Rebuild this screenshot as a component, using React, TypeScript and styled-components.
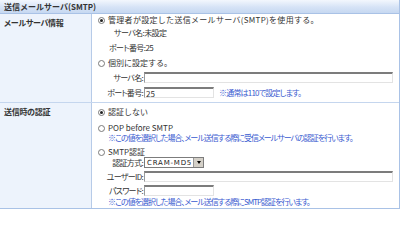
import styled, { createGlobalStyle } from 'styled-components';

const GlobalStyle = createGlobalStyle`
  body {
    margin: 0;
    background: #ffffff;
    font-family: 'Noto Sans CJK JP', 'Noto Sans', sans-serif;
    font-size: 8px;
    line-height: 10px;
    color: #333333;
  }
`;

const App = () => {
  return (
    <>
      <GlobalStyle />
      <Panel>
        <Header>送信メールサーバ(SMTP)</Header>
        <Row $pad='1px 6px 3px'>
          <Label>メールサーバ情報</Label>
          <Content>
            <RadioLine $gap={3} $spacing={0.3}>
              <Radio $checked />
              管理者が設定した送信メールサーバ(SMTP)を使用する。
            </RadioLine>
            <Fields $indent={16} $gap={5}>
              サーバ名:未設定
            </Fields>
            <Fields $indent={11} $gap={5}>
              ポート番号:25
            </Fields>
            <RadioLine $gap={4}>
              <Radio />
              個別に設定する。
            </RadioLine>
            <InputGrid $rowGap={4}>
              <FieldLabel>サーバ名:</FieldLabel>
              <TextInput $width={249} />
              <FieldLabel>ポート番号:</FieldLabel>
              <InputWithNote>
                <TextInput $width={70} defaultValue='25' />
                <Note>※通常は110で設定します。</Note>
              </InputWithNote>
            </InputGrid>
          </Content>
        </Row>
        <Row $pad='4px 6px 0'>
          <Label>送信時の認証</Label>
          <Content>
            <RadioLine $gap={6}>
              <Radio $checked />
              認証しない
            </RadioLine>
            <RadioLine $gap={0}>
              <Radio />
              POP before SMTP
            </RadioLine>
            <IndentNote $gap={4}>※この値を選択した場合、メール送信する際に受信メールサーバの認証を行います。</IndentNote>
            <RadioLine $gap={0}>
              <Radio />
              SMTP認証
            </RadioLine>
            <InputGrid $rowGap={3}>
              <FieldLabel>認証方式:</FieldLabel>
              <Select>
                <span>CRAM-MD5</span>
                <SelectArrow />
              </Select>
              <FieldLabel>ユーザーID:</FieldLabel>
              <TextInput $width={249} />
              <FieldLabel>パスワード:</FieldLabel>
              <TextInput $width={70} />
            </InputGrid>
            <IndentNote $gap={0}>※この値を選択した場合、メール送信する際にSMTP認証を行います。</IndentNote>
          </Content>
        </Row>
      </Panel>
    </>
  );
};

export default App;

const Panel = styled.div`
  width: 399px;
  height: 208px;
  border-right: 1px solid #a9c2e6;
  border-bottom: 1px solid #a9c2e6;
  display: flex;
  flex-direction: column;
  overflow: hidden;
`;

const Header = styled.div`
  height: 13px;
  line-height: 13px;
  padding-left: 4px;
  font-weight: bold;
  color: #333333;
  background: linear-gradient(#f3f7fd, #d6e3f6 55%, #c6d8f1);
  border-bottom: 1px solid #a9c2e6;
`;

const Row = styled.div<{ $pad: string }>`
  display: grid;
  grid-template-columns: 92px 1fr;
  border-bottom: 1px solid #c5d6ee;

  & > div:last-child {
    padding: ${p => p.$pad};
  }

  &:last-child {
    flex: 1;
    border-bottom: none;
  }
`;

const Label = styled.div`
  background: #edf3fc;
  border-right: 1px solid #b7cbe8;
  padding: 4px 4px;
  font-weight: bold;
  font-feature-settings: 'palt';
  letter-spacing: -0.3px;
  color: #333333;
`;

const Content = styled.div`
  display: flex;
  flex-direction: column;
`;

const RadioLine = styled.div<{ $gap: number; $spacing?: number }>`
  display: flex;
  align-items: center;
  height: 10px;
  white-space: nowrap;
  letter-spacing: ${p => p.$spacing ?? 0}px;
  margin-bottom: ${p => p.$gap}px;
`;

const Radio = styled.span<{ $checked?: boolean }>`
  width: 7px;
  height: 7px;
  margin-right: 3px;
  border-radius: 50%;
  border: 1px solid #7a7a7a;
  background: #ffffff;
  position: relative;
  box-sizing: border-box;
  flex-shrink: 0;

  &::after {
    content: '';
    display: ${p => (p.$checked ? 'block' : 'none')};
    position: absolute;
    left: 1px;
    top: 1px;
    width: 3px;
    height: 3px;
    border-radius: 50%;
    background: #222222;
  }
`;

const Fields = styled.div<{ $indent: number; $gap: number }>`
  height: 10px;
  padding-left: ${p => p.$indent}px;
  margin-bottom: ${p => p.$gap}px;
  font-feature-settings: 'palt';
  letter-spacing: -0.6px;
`;

const FieldLabel = styled.span`
  justify-self: end;
  white-space: nowrap;
  font-feature-settings: 'palt';
  letter-spacing: -0.7px;
  padding-right: 1px;
`;

const InputGrid = styled.div<{ $rowGap: number }>`
  display: grid;
  grid-template-columns: 46px auto;
  justify-content: start;
  align-items: center;
  row-gap: ${p => p.$rowGap}px;
  margin-bottom: 1px;
`;

const TextInput = styled.input<{ $width: number }>`
  width: ${p => p.$width}px;
  height: 11px;
  box-sizing: border-box;
  margin: 0;
  padding: 0 1px;
  font-family: 'Noto Sans CJK JP', sans-serif;
  font-size: 8px;
  color: #333333;
  border: 1px solid #e3e3e3;
  border-top: 2px solid #7c7c7c;
  border-left: 1px solid #9a9a9a;
  outline: none;
`;

const InputWithNote = styled.div`
  display: flex;
  align-items: center;
  gap: 5px;
`;

const Note = styled.span`
  color: #3a5bd0;
  white-space: nowrap;
  font-feature-settings: 'palt';
  letter-spacing: -0.8px;
`;

const IndentNote = styled.div<{ $gap: number }>`
  color: #3a5bd0;
  padding-left: 10px;
  height: 10px;
  white-space: nowrap;
  font-feature-settings: 'palt';
  letter-spacing: -1px;
  margin-bottom: ${p => p.$gap}px;
`;

const Select = styled.div`
  width: 60px;
  height: 11px;
  box-sizing: border-box;
  display: flex;
  align-items: center;
  justify-content: space-between;
  border: 1px solid #7c7c7c;
  padding-left: 2px;
  font-family: 'DejaVu Sans', sans-serif;
  font-size: 7px;
  letter-spacing: 0.8px;
  color: #222222;
  background: #ffffff;
`;

const SelectArrow = styled.span`
  width: 9px;
  height: 9px;
  background: #d4d0c8;
  border-left: 1px solid #999999;
  display: flex;
  align-items: center;
  justify-content: center;

  &::after {
    content: '';
    border-left: 2.5px solid transparent;
    border-right: 2.5px solid transparent;
    border-top: 3px solid #000000;
  }
`;
